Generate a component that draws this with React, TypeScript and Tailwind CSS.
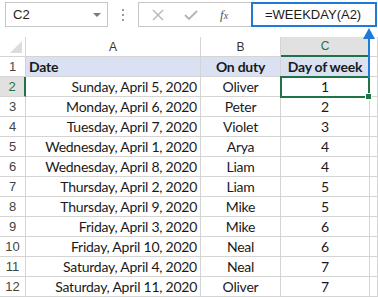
import React from 'react';

const rows: [string, string, string][] = [
  ['Sunday, April 5, 2020', 'Oliver', '1'],
  ['Monday, April 6, 2020', 'Peter', '2'],
  ['Tuesday, April 7, 2020', 'Violet', '3'],
  ['Wednesday, April 1, 2020', 'Arya', '4'],
  ['Wednesday, April 8, 2020', 'Liam', '4'],
  ['Thursday, April 2, 2020', 'Liam', '5'],
  ['Thursday, April 9, 2020', 'Mike', '5'],
  ['Friday, April 3, 2020', 'Mike', '6'],
  ['Friday, April 10, 2020', 'Neal', '6'],
  ['Saturday, April 4, 2020', 'Neal', '7'],
  ['Saturday, April 11, 2020', 'Oliver', '7'],
];

const cols = 'grid grid-cols-[26px_175px_80px_89px_1fr]';
const cell = 'h-[20px] border-r border-b border-[#d4d4d4] flex items-center';
const body = "font-['Lato',sans-serif] text-[14px] tracking-[-0.25px] text-[#1a1a1a]";

const App: React.FC = () => {
  return (
    <div className="relative w-[378px] h-[297px] overflow-hidden bg-white font-['Liberation_Sans',sans-serif]">
      {/* barre de formule */}
      <div className="h-[37px] flex items-start pt-[2px]">
        <div className="ml-[5px] w-[103px] h-[25px] border border-[#c6c6c6] flex items-center justify-between pl-[7px] pr-[6px] text-[13px] text-[#222]">
          <span>C2</span>
          <span className="w-0 h-0 border-l-[4px] border-r-[4px] border-t-[4px] border-l-transparent border-r-transparent border-t-[#7a7a7a]" />
        </div>
        <div className="w-[30px] h-[25px] flex flex-col items-center justify-center gap-[3px]">
          <span className="w-[2px] h-[2px] bg-[#9a9a9a]" />
          <span className="w-[2px] h-[2px] bg-[#9a9a9a]" />
          <span className="w-[2px] h-[2px] bg-[#9a9a9a]" />
        </div>
        <div className="w-[113px] h-[25px] border border-r-0 border-[#c6c6c6] flex items-center">
          <svg width="12" height="12" viewBox="0 0 12 12" className="ml-[13px]">
            <path d="M1 1 L11 11 M11 1 L1 11" stroke="#b4b4b4" strokeWidth="1.4" />
          </svg>
          <svg width="14" height="12" viewBox="0 0 14 12" className="ml-[20px]">
            <path d="M1 6 L5 10 L13 2" stroke="#b4b4b4" strokeWidth="1.8" fill="none" />
          </svg>
          <span className="ml-[22px] text-[13px] italic text-[#555] font-['Liberation_Serif',serif]">
            f<span className="text-[10px]">x</span>
          </span>
        </div>
        <div className="w-[126px] h-[25px] border-2 border-[#1e7ad8] flex items-center pl-[12px] text-[13px] text-[#1a1a1a]">
          =WEEKDAY(A2)
        </div>
      </div>

      {/* en-têtes de colonnes */}
      <div className={cols}>
        <div className="h-[20px] border-r border-b border-[#d4d4d4] flex items-end justify-end pr-[3px] pb-[3px]">
          <svg width="12" height="12" viewBox="0 0 12 12">
            <path d="M12 0 L12 12 L0 12 Z" fill="#dcdcdc" />
          </svg>
        </div>
        <div className={`${cell} justify-center text-[12px] text-[#333]`}>A</div>
        <div className={`${cell} justify-center text-[12px] text-[#333]`}>B</div>
        <div className="h-[20px] border-r border-[#d4d4d4] border-b-2 border-b-[#217346] bg-[#e1e1e1] flex items-center justify-center text-[12px] text-[#217346]">C</div>
        <div className={cell} />
      </div>

      {/* ligne 1 */}
      <div className={cols}>
        <div className={`${cell} justify-center text-[13px] text-[#444]`}>1</div>
        <div className={`${cell} bg-[#d9e1f2] pl-[3px] font-bold ${body}`}>Date</div>
        <div className={`${cell} bg-[#d9e1f2] justify-center font-bold ${body}`}>On duty</div>
        <div className={`${cell} bg-[#d9e1f2] justify-center font-bold ${body}`}>Day of week</div>
        <div className={cell} />
      </div>

      {rows.map(([date, name, day], i) => (
        <div key={i} className={cols}>
          <div
            className={
              i === 0
                ? 'h-[20px] border-b border-[#d4d4d4] border-r-2 border-r-[#217346] bg-[#e1e1e1] flex items-center justify-center text-[13px] text-[#217346]'
                : `${cell} justify-center text-[13px] text-[#444]`
            }
          >
            {i + 2}
          </div>
          <div className={`${cell} justify-end pr-[3px] ${body}`}>{date}</div>
          <div className={`${cell} justify-center ${body}`}>{name}</div>
          <div className={`${cell} justify-center ${body}`}>{day}</div>
          <div className={cell} />
        </div>
      ))}

      {/* cellule active C2 */}
      <div className="absolute left-[280px] top-[76px] w-[90px] h-[22px] border-2 border-[#217346]" />
      <div className="absolute left-[365px] top-[93px] w-[7px] h-[7px] bg-[#217346] border border-white" />

      {/* flèche bleue */}
      <svg className="absolute left-[361px] top-[26px]" width="16" height="52" viewBox="0 0 16 52">
        <path d="M8 8 L8 52" stroke="#1e7ad8" strokeWidth="2" />
        <path d="M2 13 L8 2 L14 13 Z" fill="#1e7ad8" />
      </svg>
    </div>
  );
};

export default App;
